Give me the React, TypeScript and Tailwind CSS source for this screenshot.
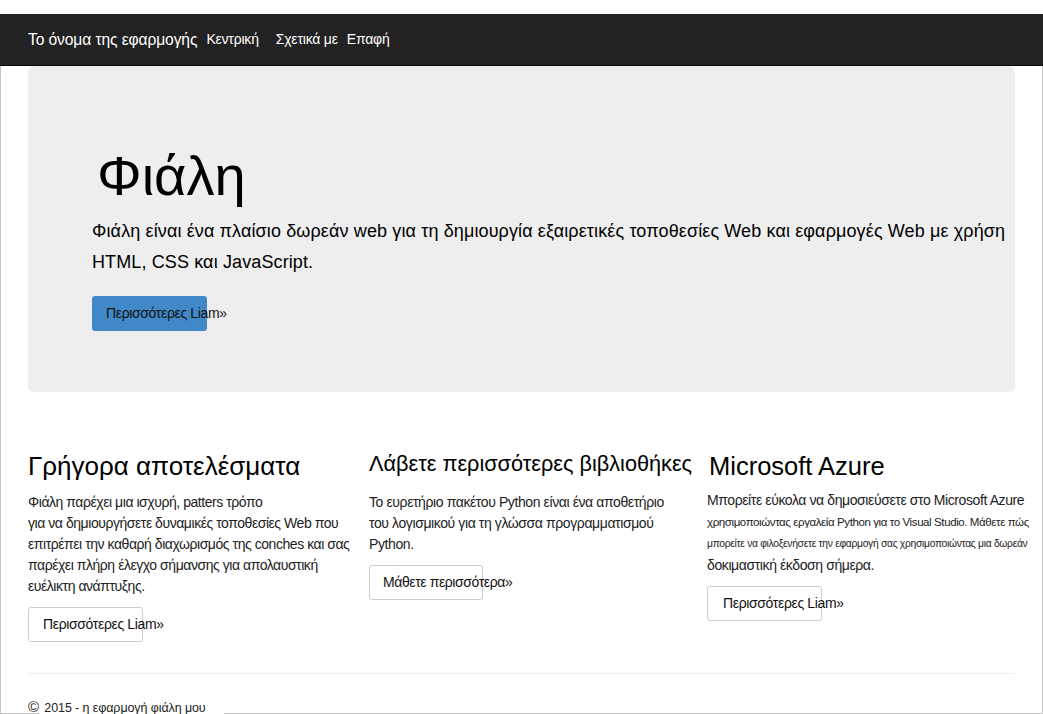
export default function App() {
  return (
    <div className="w-[1043px] h-[714px] overflow-hidden bg-white font-['Liberation_Sans','Noto_Sans',sans-serif] text-[#222]">
      <div className="h-[14px]" />

      {/* Navbar */}
      <nav className="h-[52px] bg-[#222] border-b border-[#080808] flex items-center pl-[28px] text-white">
        <span className="text-[15.6px] tracking-[-0.1px]">Το όνομα της εφαρμογής</span>
        <span className="ml-[9px] text-[14px] tracking-[-0.2px]">Κεντρική</span>
        <span className="ml-[17px] text-[14px] tracking-[-0.2px]">Σχετικά με</span>
        <span className="ml-[9px] text-[14px] tracking-[-0.2px]">Επαφή</span>
      </nav>

      <div className="h-[648px] border-x border-b border-[#c4c4c4] pl-[27px]">
        {/* Jumbotron */}
        <div className="w-[987px] h-[326px] bg-[#eee] rounded-md pl-[64px] pt-[79px]">
          <h1 className="ml-[5px] text-[56px] leading-[1.1] text-black">Φιάλη</h1>
          <p className="mt-[9px] text-[18px] leading-[31px] tracking-[0.12px] text-black w-[940px] whitespace-nowrap">
            Φιάλη είναι ένα πλαίσιο δωρεάν web για τη δημιουργία εξαιρετικές τοποθεσίες Web και εφαρμογές Web με χρήση
            <br />
            HTML, CSS και JavaScript.
          </p>
          <div className="mt-[18px] w-[115px] h-[35px] bg-[#4088c8] rounded-[3px] pl-[14px] flex items-center whitespace-nowrap text-[14px] tracking-[-0.35px] text-[#111]">
            Περισσότερες Liam»
          </div>
        </div>

        {/* Columns */}
        <div className="flex mt-[61px] h-[188px]">
          <div className="w-[341px] shrink-0">
            <h2 className="text-[26px] leading-[26px] text-black">Γρήγορα αποτελέσματα</h2>
            <p className="mt-[13px] text-[14px] leading-[21px] whitespace-nowrap tracking-[-0.45px]">
              Φιάλη παρέχει μια ισχυρή, patters τρόπο
              <br />
              για να δημιουργήσετε δυναμικές τοποθεσίες Web που
              <br />
              επιτρέπει την καθαρή διαχωρισμός της conches και σας
              <br />
              παρέχει πλήρη έλεγχο σήμανσης για απολαυστική
              <br />
              ευέλικτη ανάπτυξης.
            </p>
            <div className="mt-[10px] w-[115px] h-[35px] border border-[#ccc] rounded-[3px] pl-[14px] flex items-center whitespace-nowrap text-[14px] tracking-[-0.35px] text-[#111]">
              Περισσότερες Liam»
            </div>
          </div>

          <div className="w-[340px] shrink-0">
            <h2 className="mt-[-2px] text-[21.7px] leading-[26px] text-black">Λάβετε περισσότερες βιβλιοθήκες</h2>
            <p className="mt-[15px] text-[14px] leading-[21px] whitespace-nowrap tracking-[-0.4px]">
              Το ευρετήριο πακέτου Python είναι ένα αποθετήριο
              <br />
              του λογισμικού για τη γλώσσα προγραμματισμού
              <br />
              Python.
            </p>
            <div className="mt-[10px] w-[114px] h-[35px] border border-[#ccc] rounded-[3px] pl-[13px] flex items-center whitespace-nowrap text-[14px] tracking-[-0.4px] text-[#111]">
              Μάθετε περισσότερα»
            </div>
          </div>

          <div className="w-[306px] shrink-0 -ml-[2px]">
            <h2 className="ml-[2px] text-[25.5px] leading-[26px] text-black">Microsoft Azure</h2>
            <div className="mt-[11px] whitespace-nowrap leading-[21.5px]">
              <div className="text-[14px] tracking-[-0.4px]">Μπορείτε εύκολα να δημοσιεύσετε στο Microsoft Azure</div>
              <div className="text-[11.5px] tracking-[-0.4px]">χρησιμοποιώντας εργαλεία Python για το Visual Studio. Μάθετε πώς</div>
              <div className="text-[10.3px] tracking-[-0.3px]">μπορείτε να φιλοξενήσετε την εφαρμογή σας χρησιμοποιώντας μια δωρεάν</div>
              <div className="text-[14px] tracking-[-0.4px]">δοκιμαστική έκδοση σήμερα.</div>
            </div>
            <div className="mt-[10px] w-[115px] h-[35px] border border-[#ccc] rounded-[3px] pl-[15px] flex items-center whitespace-nowrap text-[14px] tracking-[-0.35px] text-[#111]">
              Περισσότερες Liam»
            </div>
          </div>
        </div>

        {/* Footer */}
        <div className="w-[987px] mt-[32px] border-t border-[#eee]" />
        <p className="mt-[23px] text-[12.5px] leading-[20px] whitespace-nowrap tracking-[-0.1px]">
          <span className="text-[15px]">©</span>
          <span className="bg-white pl-[2px] pr-[18px] pb-[6px]"> 2015 - η εφαρμογή φιάλη μου</span>
        </p>
      </div>
    </div>
  );
}
